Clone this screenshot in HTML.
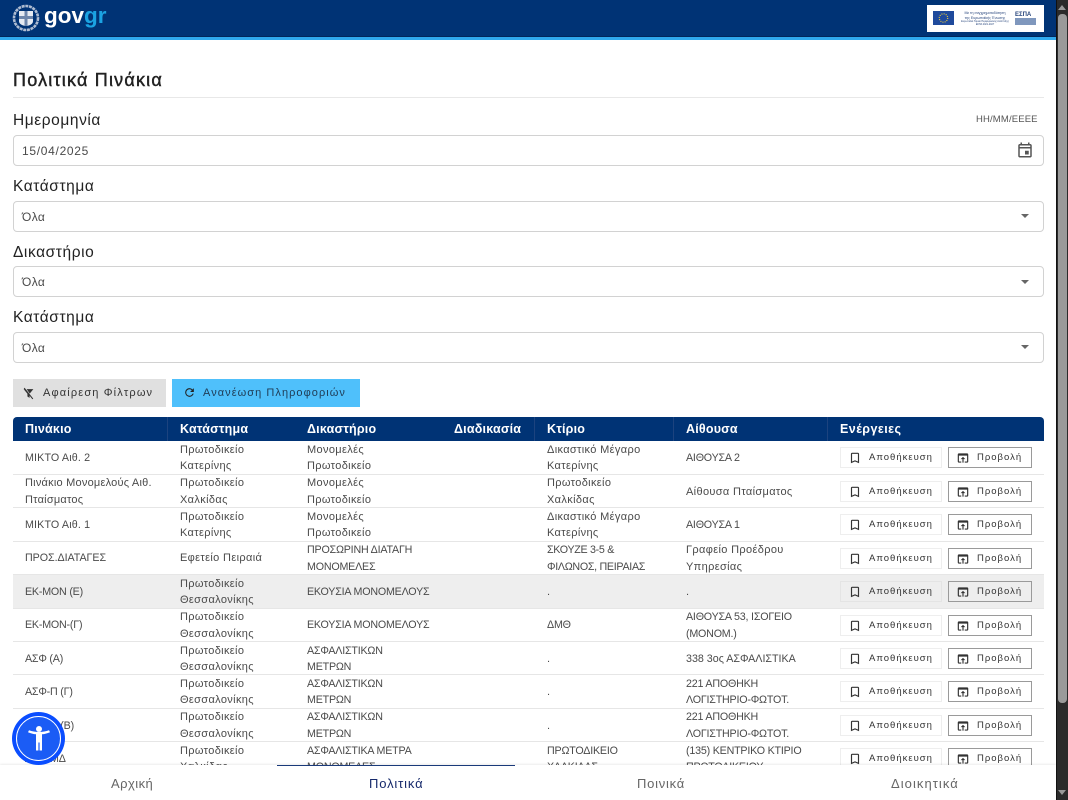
<!DOCTYPE html>
<html lang="el"><head><meta charset="utf-8"><title>Πολιτικά Πινάκια</title>
<style>
*{box-sizing:border-box}
html,body{margin:0;padding:0;width:1068px;height:800px;overflow:hidden;background:#fff}
body{font-family:"Liberation Sans",sans-serif;color:#333;position:relative}
.a{position:absolute;white-space:nowrap}
.lab{left:13px;font-size:15.5px;letter-spacing:.58px;color:#222;line-height:18px;margin-top:1px}
.box{left:13px;width:1031px;height:31px;border:1px solid #d2d2d2;border-radius:4px;background:#fff}
.val{left:22px;font-size:12px;letter-spacing:.4px;color:#4a4a4a;line-height:16px}
.car{left:1021px;width:0;height:0;border-left:4.5px solid transparent;border-right:4.5px solid transparent;border-top:4.5px solid #666}
.btn{height:28px;top:379px;font-size:11px;letter-spacing:1.15px;line-height:28px;color:#333}
.th{top:421px;font-size:12.5px;font-weight:bold;color:#fff;letter-spacing:.2px;line-height:16px}
.sep{top:417px;width:1px;height:24px;background:#1c437f}
.row{position:absolute;left:13px;width:1031px;height:33.45px;border-bottom:1px solid #e6e6e6}
.c{position:absolute;top:.5px;height:33px;display:flex;align-items:center;font-size:11px;letter-spacing:.35px;line-height:16.4px;color:#4a4a4a;white-space:nowrap}
.u{font-size:10.7px;letter-spacing:-.2px}
.b{position:absolute;top:6px;height:21px;font-size:9.5px;letter-spacing:1px;line-height:20px;color:#333;background:#fff}
.b1{left:827px;width:102px;border:1px solid #eee}
.b2{left:935px;width:84px;border:1px solid #9a9a9a}
.b svg{position:absolute;top:3px;left:7px}
.b span{position:absolute;top:0}
.b1 span{left:28px}.b2 span{left:28px}
.nav{top:776px;font-size:13px;letter-spacing:.75px;line-height:16px;color:#666}
</style></head><body>

<div class="a" style="left:0;top:0;width:1056px;height:37px;background:#003375"></div>
<div class="a" style="left:0;top:36px;width:1056px;height:1px;background:#00275c"></div>
<div class="a" style="left:0;top:37px;width:1056px;height:3px;background:#2fa9ee"></div>
<svg class="a" style="left:12px;top:4px" width="28" height="28" viewBox="0 0 28 28"><circle cx="14" cy="14" r="12" fill="none" stroke="#aebcd1" stroke-width="2.6" stroke-dasharray="3 .7"/><path d="M7 7h14v10q0 4-7 5q-7-1-7-5z" fill="#e6ebf2"/><path d="M12.500 7h3v15h-3zM7 12h14v3H7z" fill="#6d86ab"/></svg>
<div class="a" style="left:44px;top:0;font-size:22.500px;font-weight:bold;line-height:32px;color:#fff;letter-spacing:0">gov<span style="color:#1ba3e3">gr</span></div>
<div class="a" style="left:927px;top:5px;width:117px;height:27px;background:#fff"></div>
<div class="a" style="left:933px;top:11px;width:21px;height:14px;background:#1f4a9c"></div>
<svg class="a" style="left:933px;top:11px" width="21" height="14" viewBox="0 0 21 14"><circle cx="10.500" cy="7" r="4.200" fill="none" stroke="#e8c93a" stroke-width="1.200" stroke-dasharray="1 1.200"/></svg>
<div class="a" style="left:960px;top:11px;font-size:3.600px;line-height:4.500px;color:#27457c;text-align:center;width:50px">Με τη συγχρηματοδότηση<br>της Ευρωπαϊκής Ένωσης<br><span style="font-size:2.400px;line-height:3px;display:inline-block">Ευρωπαϊκό Ταμείο Περιφερειακής Ανάπτυξης<br>ΕΣΠΑ 2021-2027</span></div>
<div class="a" style="left:1015px;top:12px;width:21px;height:5px;font-size:6px;font-weight:bold;line-height:6px;color:#27457c">ΕΣΠΑ</div>
<div class="a" style="left:1015px;top:18px;width:21px;height:7px;background:#7f97bd"></div>

<div class="a" style="left:13px;top:69px;font-size:18px;letter-spacing:1.2px;line-height:22px;color:#222;-webkit-text-stroke:.45px #222">Πολιτικά Πινάκια</div>
<div class="a" style="left:13px;top:97px;width:1031px;height:1px;background:#e8e8e8"></div>

<div class="a lab" style="top:111px">Ημερομηνία</div>
<div class="a" style="left:976px;top:113px;font-size:9.500px;letter-spacing:.15px;line-height:13px;color:#555">HH/MM/EEEE</div>
<div class="a box" style="top:135px"></div>
<div class="a val" style="top:143px;letter-spacing:.7px">15/04/2025</div>
<svg class="a" style="left:1016px;top:141px" width="18" height="18" viewBox="0 0 24 24"><path fill="#555" d="M19 4h-1V2h-2v2H8V2H6v2H5c-1.100 0-2 .9-2 2v14c0 1.100.9 2 2 2h14c1.100 0 2-.9 2-2V6c0-1.100-.9-2-2-2zm0 16H5V10h14v10zm0-12H5V6h14v2zm-7 5h5v5h-5z"/></svg>

<div class="a lab" style="top:177px">Κατάστημα</div>
<div class="a box" style="top:201px"></div>
<div class="a val" style="top:209px">Όλα</div>
<div class="a car" style="top:214px"></div>

<div class="a lab" style="top:243px">Δικαστήριο</div>
<div class="a box" style="top:266px"></div>
<div class="a val" style="top:274px">Όλα</div>
<div class="a car" style="top:280px"></div>

<div class="a lab" style="top:308px">Κατάστημα</div>
<div class="a box" style="top:332px"></div>
<div class="a val" style="top:340px">Όλα</div>
<div class="a car" style="top:345px"></div>

<div class="a btn" style="left:13px;width:153px;background:#e0e0e0;padding-left:30px">Αφαίρεση Φίλτρων</div>
<svg class="a" style="left:22px;top:387px" width="13" height="13" viewBox="0 0 24 24"><path fill="#333" d="M3 4h18l-7 8.500V20l-4-2.500v-5z"/><path stroke="#e0e0e0" stroke-width="2" d="M6 2l14 20"/><path stroke="#333" stroke-width="2" d="M4 2l16 20"/></svg>
<div class="a btn" style="left:172px;width:188px;background:#4fc0fb;padding-left:31px;letter-spacing:1.050px;color:#1f3b55">Ανανέωση Πληροφοριών</div>
<svg class="a" style="left:183px;top:386px" width="13" height="13" viewBox="0 0 24 24"><path fill="#222" d="M17.650 6.350A7.960 7.960 0 0 0 12 4a8 8 0 1 0 7.730 10h-2.080A6 6 0 1 1 12 6c1.660 0 3.140.69 4.220 1.780L13 11h7V4z"/></svg>

<div class="a" style="left:13px;top:417px;width:1031px;height:24px;background:#003375;border-radius:4px 4px 0 0"></div>
<div class="a sep" style="left:167px"></div><div class="a sep" style="left:534px"></div><div class="a sep" style="left:673px"></div><div class="a sep" style="left:827px"></div>
<div class="a th" style="left:25px">Πινάκιο</div>
<div class="a th" style="left:180px">Κατάστημα</div>
<div class="a th" style="left:307px">Δικαστήριο</div>
<div class="a th" style="left:454px">Διαδικασία</div>
<div class="a th" style="left:547px">Κτίριο</div>
<div class="a th" style="left:686px">Αίθουσα</div>
<div class="a th" style="left:840px;letter-spacing:.45px">Ενέργειες</div>

<svg width="0" height="0" style="position:absolute"><defs>
<symbol id="bm" viewBox="0 0 24 24"><path fill="#333" d="M17 3H7c-1.100 0-2 .9-2 2v16l7-3 7 3V5c0-1.100-.9-2-2-2zm0 15-5-2.180L7 18V5h10v13z"/></symbol>
<symbol id="op" viewBox="0 0 24 24"><path fill="#333" d="M19 4H5a2 2 0 0 0-2 2v12a2 2 0 0 0 2 2h4v-2H5V8h14v10h-4v2h4a2 2 0 0 0 2-2V6a2 2 0 0 0-2-2zm-7 6-4 4h3v6h2v-6h3z"/></symbol>
</defs></svg>

<div class="row" style="top:441.300px"><div class="c u" style="left:12px;letter-spacing:.15px">ΜΙΚΤΟ Αιθ. 2</div><div class="c" style="left:167px">Πρωτοδικείο<br>Κατερίνης</div><div class="c" style="left:294px">Μονομελές<br>Πρωτοδικείο</div><div class="c" style="left:534px">Δικαστικό Μέγαρο<br>Κατερίνης</div><div class="c u" style="left:673px">ΑΙΘΟΥΣΑ 2</div><div class="b b1"><svg width="14" height="14"><use href="#bm"/></svg><span>Αποθήκευση</span></div><div class="b b2"><svg width="14" height="14"><use href="#op"/></svg><span>Προβολή</span></div></div>

<div class="row" style="top:474.750px"><div class="c" style="left:12px;letter-spacing:.22px">Πινάκιο Μονομελούς Αιθ.<br>Πταίσματος</div><div class="c" style="left:167px">Πρωτοδικείο<br>Χαλκίδας</div><div class="c" style="left:294px">Μονομελές<br>Πρωτοδικείο</div><div class="c" style="left:534px">Πρωτοδικείο<br>Χαλκίδας</div><div class="c" style="left:673px">Αίθουσα Πταίσματος</div><div class="b b1"><svg width="14" height="14"><use href="#bm"/></svg><span>Αποθήκευση</span></div><div class="b b2"><svg width="14" height="14"><use href="#op"/></svg><span>Προβολή</span></div></div>

<div class="row" style="top:508.200px"><div class="c u" style="left:12px;letter-spacing:.15px">ΜΙΚΤΟ Αιθ. 1</div><div class="c" style="left:167px">Πρωτοδικείο<br>Κατερίνης</div><div class="c" style="left:294px">Μονομελές<br>Πρωτοδικείο</div><div class="c" style="left:534px">Δικαστικό Μέγαρο<br>Κατερίνης</div><div class="c u" style="left:673px">ΑΙΘΟΥΣΑ 1</div><div class="b b1"><svg width="14" height="14"><use href="#bm"/></svg><span>Αποθήκευση</span></div><div class="b b2"><svg width="14" height="14"><use href="#op"/></svg><span>Προβολή</span></div></div>

<div class="row" style="top:541.650px"><div class="c u" style="left:12px;letter-spacing:-.05px">ΠΡΟΣ.ΔΙΑΤΑΓΕΣ</div><div class="c" style="left:167px">Εφετείο Πειραιά</div><div class="c u" style="left:294px">ΠΡΟΣΩΡΙΝΗ ΔΙΑΤΑΓΗ<br>ΜΟΝΟΜΕΛΕΣ</div><div class="c u" style="left:534px;letter-spacing:-.3px">ΣΚΟΥΖΕ 3-5 &amp;<br>ΦΙΛΩΝΟΣ, ΠΕΙΡΑΙΑΣ</div><div class="c" style="left:673px">Γραφείο Προέδρου<br>Υπηρεσίας</div><div class="b b1"><svg width="14" height="14"><use href="#bm"/></svg><span>Αποθήκευση</span></div><div class="b b2"><svg width="14" height="14"><use href="#op"/></svg><span>Προβολή</span></div></div>

<div class="row" style="top:575.100px;background:#eeeeee"><div class="c u" style="left:12px">ΕΚ-ΜΟΝ (Ε)</div><div class="c" style="left:167px">Πρωτοδικείο<br>Θεσσαλονίκης</div><div class="c u" style="left:294px">ΕΚΟΥΣΙΑ ΜΟΝΟΜΕΛΟΥΣ</div><div class="c" style="left:534px">.</div><div class="c" style="left:673px">.</div><div class="b b1" style="background:#eee;border-color:#e4e4e4"><svg width="14" height="14"><use href="#bm"/></svg><span>Αποθήκευση</span></div><div class="b b2" style="background:#eee"><svg width="14" height="14"><use href="#op"/></svg><span>Προβολή</span></div></div>

<div class="row" style="top:608.550px"><div class="c u" style="left:12px">ΕΚ-ΜΟΝ-(Γ)</div><div class="c" style="left:167px">Πρωτοδικείο<br>Θεσσαλονίκης</div><div class="c u" style="left:294px">ΕΚΟΥΣΙΑ ΜΟΝΟΜΕΛΟΥΣ</div><div class="c u" style="left:534px">ΔΜΘ</div><div class="c u" style="left:673px">ΑΙΘΟΥΣΑ 53, ΙΣΟΓΕΙΟ<br>(ΜΟΝΟΜ.)</div><div class="b b1"><svg width="14" height="14"><use href="#bm"/></svg><span>Αποθήκευση</span></div><div class="b b2"><svg width="14" height="14"><use href="#op"/></svg><span>Προβολή</span></div></div>

<div class="row" style="top:642px"><div class="c u" style="left:12px">ΑΣΦ (Α)</div><div class="c" style="left:167px">Πρωτοδικείο<br>Θεσσαλονίκης</div><div class="c u" style="left:294px">ΑΣΦΑΛΙΣΤΙΚΩΝ<br>ΜΕΤΡΩΝ</div><div class="c" style="left:534px">.</div><div class="c u" style="left:673px;letter-spacing:0">338 3ος ΑΣΦΑΛΙΣΤΙΚΑ</div><div class="b b1"><svg width="14" height="14"><use href="#bm"/></svg><span>Αποθήκευση</span></div><div class="b b2"><svg width="14" height="14"><use href="#op"/></svg><span>Προβολή</span></div></div>

<div class="row" style="top:675.450px"><div class="c u" style="left:12px">ΑΣΦ-Π (Γ)</div><div class="c" style="left:167px">Πρωτοδικείο<br>Θεσσαλονίκης</div><div class="c u" style="left:294px">ΑΣΦΑΛΙΣΤΙΚΩΝ<br>ΜΕΤΡΩΝ</div><div class="c" style="left:534px">.</div><div class="c u" style="left:673px">221 ΑΠΟΘΗΚΗ<br>ΛΟΓΙΣΤΗΡΙΟ-ΦΩΤΟΤ.</div><div class="b b1"><svg width="14" height="14"><use href="#bm"/></svg><span>Αποθήκευση</span></div><div class="b b2"><svg width="14" height="14"><use href="#op"/></svg><span>Προβολή</span></div></div>

<div class="row" style="top:708.900px"><div class="c u" style="left:12px">ΑΣΦ-Π (Β)</div><div class="c" style="left:167px">Πρωτοδικείο<br>Θεσσαλονίκης</div><div class="c u" style="left:294px">ΑΣΦΑΛΙΣΤΙΚΩΝ<br>ΜΕΤΡΩΝ</div><div class="c" style="left:534px">.</div><div class="c u" style="left:673px">221 ΑΠΟΘΗΚΗ<br>ΛΟΓΙΣΤΗΡΙΟ-ΦΩΤΟΤ.</div><div class="b b1"><svg width="14" height="14"><use href="#bm"/></svg><span>Αποθήκευση</span></div><div class="b b2"><svg width="14" height="14"><use href="#op"/></svg><span>Προβολή</span></div></div>

<div class="row" style="top:742.350px"><div class="c u" style="left:12px">ΑΣΦ-ΜΔ</div><div class="c" style="left:167px">Πρωτοδικείο<br>Χαλκίδας</div><div class="c u" style="left:294px">ΑΣΦΑΛΙΣΤΙΚΑ ΜΕΤΡΑ<br>ΜΟΝΟΜΕΛΕΣ</div><div class="c u" style="left:534px">ΠΡΩΤΟΔΙΚΕΙΟ<br>ΧΑΛΚΙΔΑΣ</div><div class="c u" style="left:673px">(135) ΚΕΝΤΡΙΚΟ ΚΤΙΡΙΟ<br>ΠΡΩΤΟΔΙΚΕΙΟΥ</div><div class="b b1"><svg width="14" height="14"><use href="#bm"/></svg><span>Αποθήκευση</span></div><div class="b b2"><svg width="14" height="14"><use href="#op"/></svg><span>Προβολή</span></div></div>

<div class="a" style="left:0;top:765px;width:1056px;height:35px;background:#fff;box-shadow:0 -1px 2px rgba(0,0,0,.08)"></div>
<div class="a" style="left:277px;top:765px;width:238px;height:1px;background:#1a3a7a"></div>
<div class="a nav" style="left:111px;letter-spacing:.45px">Αρχική</div>
<div class="a nav" style="left:369px;color:#16296b;letter-spacing:.85px">Πολιτικά</div>
<div class="a nav" style="left:637px">Ποινικά</div>
<div class="a nav" style="left:891px;letter-spacing:1.050px">Διοικητικά</div>

<div class="a" style="left:12px;top:712px;width:53px;height:53px;border-radius:50%;background:#0a4dff"></div>
<div class="a" style="left:16px;top:716px;width:45px;height:45px;border-radius:50%;border:1.500px solid #fff;background:#1b5cf5"></div>
<svg class="a" style="left:25px;top:724px" width="28" height="28" viewBox="0 0 28 28"><circle cx="14" cy="5" r="3" fill="#fff"/><path fill="#fff" d="M3 8.200l1-1.900c3 1.100 6.500 1.700 10 1.700s7-.6 10-1.700l1 1.900c-2.700 1.200-5.600 1.900-8 2.100v16.200h-2.400v-8h-1.200v8H11V10.300C8.600 10.100 5.700 9.400 3 8.200z"/></svg>

<div class="a" style="left:1056px;top:0;width:12px;height:800px;background:#2b2b2b;border-left:1px solid #111"></div>
<div class="a" style="left:1058px;top:14px;width:9px;height:689px;background:#9a9a9a;border-radius:4px"></div>
<div class="a" style="left:1058px;top:5px;width:0;height:0;border-left:4.500px solid transparent;border-right:4.500px solid transparent;border-bottom:5px solid #9a9a9a"></div>
<div class="a" style="left:1058px;top:790px;width:0;height:0;border-left:4.500px solid transparent;border-right:4.500px solid transparent;border-top:5px solid #9a9a9a"></div>

</body></html>
